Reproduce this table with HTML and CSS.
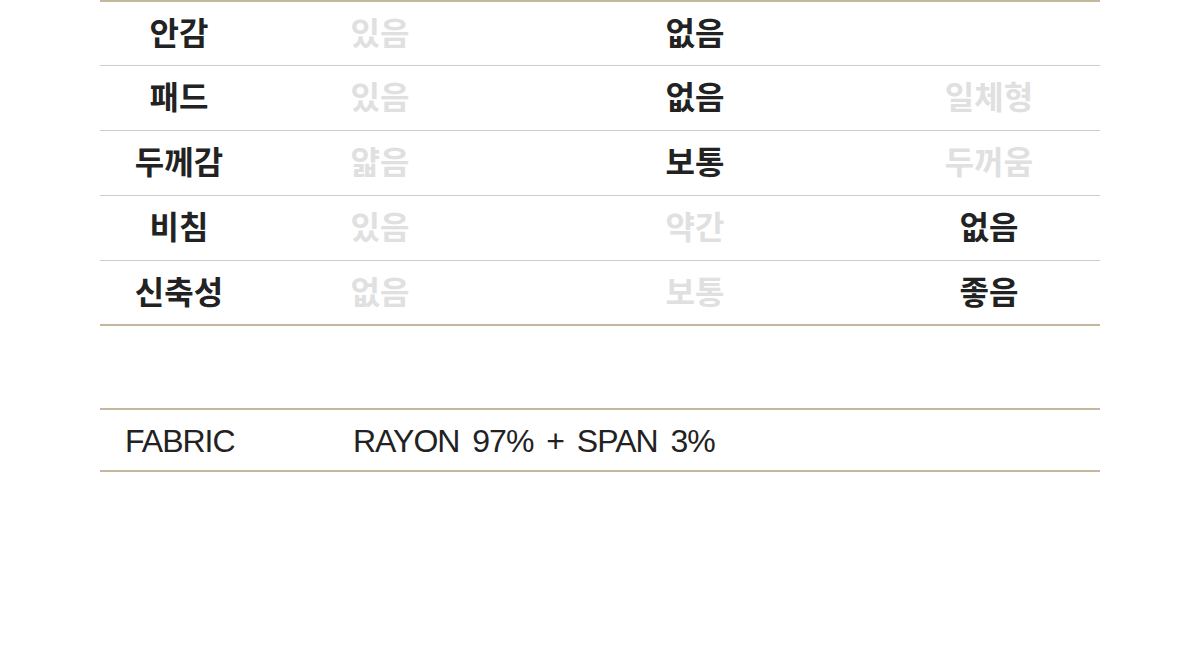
FILE: index.html
```html
<!DOCTYPE html>
<html lang="ko">
<head>
    <meta charset="UTF-8">
    <meta name="viewport" content="width=device-width, initial-scale=1.0">
    <title>상품 정보</title>
    <link rel="stylesheet" href="styles.css">
</head>
<body>
    <main class="detail">
        <table class="feel-table">
            <colgroup>
                <col class="col-label">
                <col class="col-a">
                <col class="col-b">
                <col class="col-c">
            </colgroup>
            <tbody>
                <tr>
                    <th>안감</th>
                    <td>있음</td>
                    <td class="on">없음</td>
                    <td></td>
                </tr>
                <tr>
                    <th>패드</th>
                    <td>있음</td>
                    <td class="on">없음</td>
                    <td>일체형</td>
                </tr>
                <tr>
                    <th>두께감</th>
                    <td>얇음</td>
                    <td class="on">보통</td>
                    <td>두꺼움</td>
                </tr>
                <tr>
                    <th>비침</th>
                    <td>있음</td>
                    <td>약간</td>
                    <td class="on">없음</td>
                </tr>
                <tr>
                    <th>신축성</th>
                    <td>없음</td>
                    <td>보통</td>
                    <td class="on">좋음</td>
                </tr>
            </tbody>
        </table>

        <div class="fabric">
            <span class="fabric-label">FABRIC</span>
            <span class="fabric-value">RAYON 97% + SPAN 3%</span>
        </div>
    </main>
</body>
</html>
```

FILE: styles.css
```css
body {
    margin: 0;
    background-color: #ffffff;
    color: #222222;
    font-family: "Noto Sans CJK KR", "Noto Sans", sans-serif;
}

.detail {
    width: 1000px;
    margin: 0 auto;
}

/* 착용감 표 */
.feel-table {
    width: 100%;
    border-collapse: collapse;
    table-layout: fixed;
    border-top: 2px solid #c3b79d;
    border-bottom: 2px solid #c3b79d;
}

.col-label {
    width: 158px;
}

.col-a {
    width: 244px;
}

.col-b {
    width: 386px;
}

.col-c {
    width: 212px;
}

.feel-table th,
.feel-table td {
    height: 58px;
    padding: 0 0 6px;
    text-align: center;
    vertical-align: middle;
    font-size: 32px;
    font-weight: 700;
    line-height: 1;
    color: #e0e0e0;
    border-bottom: 1px solid #cccccc;
}

.feel-table tr:first-child th,
.feel-table tr:first-child td {
    height: 57px;
}

.feel-table tr:last-child th,
.feel-table tr:last-child td {
    height: 57px;
    border-bottom: none;
}

.feel-table td:last-child {
    padding-right: 10px;
}

.feel-table th,
.feel-table td.on {
    color: #222222;
}

/* 소재 */
.fabric {
    display: flex;
    align-items: center;
    height: 57px;
    padding-top: 3px;
    margin-top: 82px;
    border-top: 2px solid #c3b79d;
    border-bottom: 2px solid #c3b79d;
    font-family: "Liberation Sans", Arial, sans-serif;
    font-size: 32px;
    letter-spacing: -1px;
    color: #222222;
}

.fabric-label {
    width: 203px;
    padding-left: 25px;
}

.fabric-value {
    padding-left: 25px;
    word-spacing: 5px;
}
```
